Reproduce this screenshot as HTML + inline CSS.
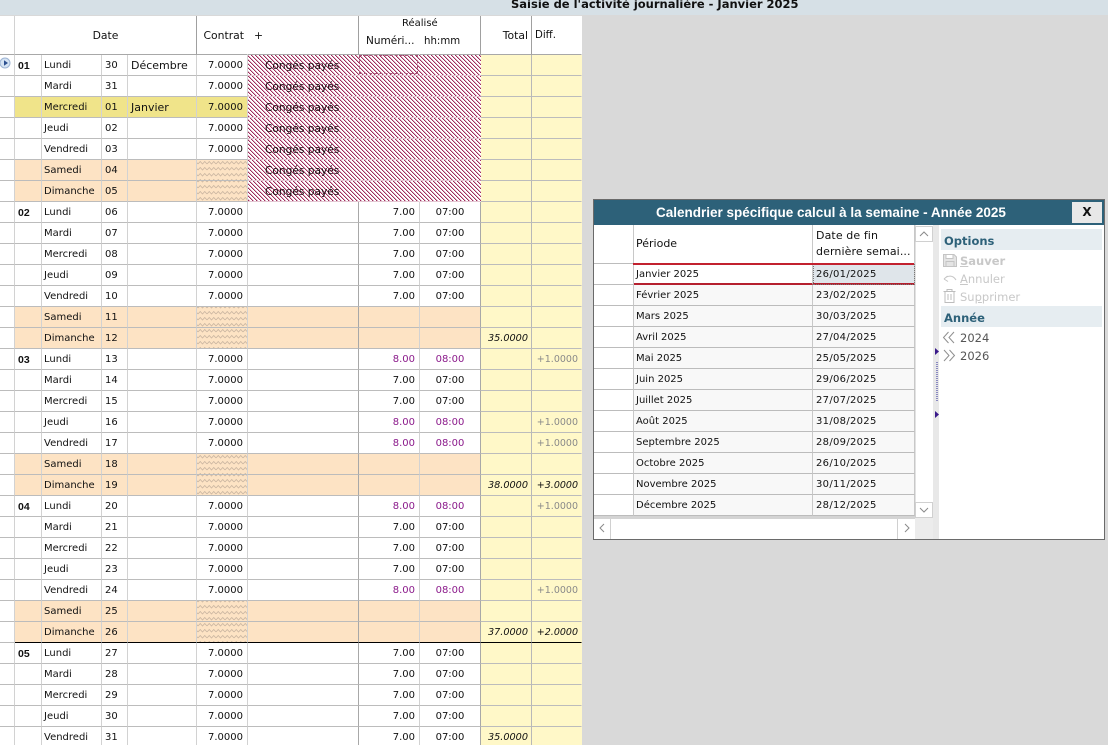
<!DOCTYPE html>
<html lang="fr"><head><meta charset="utf-8"><title>Saisie</title>
<style>
html,body{margin:0;padding:0;width:1108px;height:745px;overflow:hidden;background:#d9d9d9;font-family:"DejaVu Sans","Liberation Sans",sans-serif;font-size:10px;color:#111}
#bar{position:absolute;left:0;top:0;width:1108px;height:15px;background:#d6e0e6;overflow:hidden}
#bar b{position:absolute;left:511px;top:-3px;font-size:11.5px;line-height:14px;white-space:nowrap;color:#111}
#sheet{position:absolute;left:0;top:16px;width:582px;height:729px;overflow:hidden;background:#fff}
table{border-collapse:separate;border-spacing:0;table-layout:fixed}
#t{width:582px;position:relative}
#t td,#t th{box-sizing:border-box;height:21px;padding:0;border-right:1px solid #d2d2d2;border-bottom:1px solid #bcbcbc;white-space:nowrap;overflow:hidden;font-weight:400}
#t td{padding-top:2px;line-height:18px}
#t th{height:39px;border-bottom-color:#a8a8a8;position:relative;overflow:visible;font-size:10.8px;line-height:15px}
#t td:nth-child(2){padding-left:3px;font-weight:700;font-size:10.5px;font-family:"Liberation Sans",sans-serif}
#t td:nth-child(3){padding-left:2px}
#t td:nth-child(4){padding-left:3px}
#t td:nth-child(5){padding-left:3px;font-size:11px}
#t td:nth-child(6){text-align:right;padding-right:4px}
#t td:nth-child(7){padding-left:17px;font-size:10.6px;color:#1a0a10;border-right-color:#a8a8a8}
#t td:nth-child(8){text-align:right;padding-right:4px}
#t td:nth-child(9){text-align:center;border-right-color:#a8a8a8}
#t td:nth-child(10),#t td:nth-child(11){background:#fff8c8;font-style:italic;text-align:right;font-size:9.7px}
#t td:nth-child(10){padding-right:3px;border-right-color:#b8b8b8}
#t td:nth-child(11){padding-right:3px;border-right:1px solid #fff8c8;font-size:9.5px}
tr.p td:nth-child(n+2):nth-child(-n+9){background:#fde3c4}
tr.p td:nth-child(6){position:relative}
tr.h td:nth-child(n+2):nth-child(-n+6){background:#f0e48a}
#t tr.c td:nth-child(n+7):nth-child(-n+9){background:transparent;border-bottom-color:#e3c6d2;border-right-color:transparent}
#t tr.k td{border-bottom:1px solid #000}
#t tr.k td:nth-child(1){border-bottom:1px solid #bcbcbc}
.pu{color:#8b1a8b}
#t td.d{color:#8a8a8a;font-style:normal}
#t th.dk{border-right-color:#a0a0a0}
#t th.nr{border-right:1px solid #fff}
.zz{position:absolute;left:0;top:0;width:582px;height:729px;pointer-events:none}
#sel{position:absolute;left:359px;top:39px;width:59px;height:19px;border:1px dashed #a85478;box-sizing:border-box;background:transparent}
#play{position:absolute;left:0;top:40px;width:12px;height:14px}
.h1{position:absolute;white-space:nowrap}
/* dialog */
#dlg{position:absolute;left:593px;top:199px;width:512px;height:341px;box-sizing:border-box;border:1px solid #6a6a6a;background:#fff;overflow:hidden}
#tt{position:absolute;left:0;top:0;width:510px;height:25px;background:#2d6179;color:#fff;font-weight:700;line-height:26px}
#tt span{position:absolute;left:62px;top:0;white-space:nowrap;font-family:"Liberation Sans",sans-serif;font-size:13.5px}
#xb{position:absolute;left:478px;top:2px;width:30px;height:21px;background:#e8e8e8;color:#111;text-align:center;font-weight:700;font-size:12px;line-height:21px}
#g{position:absolute;left:0;top:25px;width:321px}
#g td,#g th{box-sizing:border-box;height:21px;padding:2px 0 0 2px;border-right:1px solid #c8c8c8;border-bottom:1px solid #bcbcbc;font-weight:400;text-align:left;white-space:nowrap;overflow:hidden;background:#f8f8f8;line-height:18px;font-size:10px}
#g td:nth-child(3){letter-spacing:.3px;padding-left:3px}
#g th{height:39px;background:#fff;line-height:16px;font-size:11px;padding-top:0}
#g td:first-child,#g th:first-child{background:#fff;padding:0}
#g tr.s td:nth-child(2),#g tr.s td:nth-child(3){background:#fff;border-bottom:2px solid #b5202f;padding-top:2px;line-height:17px}
#g tr.s td:nth-child(3){background:#dfe5ea;outline:1px dotted #777;outline-offset:-1px}
#rl{position:absolute;left:39px;top:63px;width:281px;height:2px;background:#c2212f}
.sb{position:absolute;background:#fff;border:1px solid #d0d0d0;box-sizing:border-box;text-align:center;color:#888}
#vt{position:absolute;left:321px;top:25px;width:18px;height:293px;background:#fff;border-left:1px solid #e2e2e2;box-sizing:border-box}
#ht{position:absolute;left:0;top:316px;width:321px;height:23px;background:#fff;border-top:3px solid #d4d4d4;box-sizing:border-box}
#cr{position:absolute;left:321px;top:318px;width:18px;height:21px;background:#ececec}
#sp{position:absolute;left:339px;top:25px;width:6px;height:314px;background:#e8e8e8}
.sec{position:absolute;left:347px;width:161px;height:21px;background:#e6edf1;color:#2d6179;font-weight:700;font-size:11.5px;line-height:24px;text-indent:3px}
.it{position:absolute;left:366px;color:#c8c8c8;font-size:11.5px;line-height:16px;white-space:nowrap}
.ic{position:absolute;left:348px}
</style></head><body>
<div id="bar"><b>Saisie de l'activité journalière - Janvier 2025</b></div>
<div id="sheet">
<svg class="zz" viewBox="0 0 582 729" shape-rendering="crispEdges">
<defs><pattern id="ha" x="0" y="0" width="4" height="4" patternUnits="userSpaceOnUse"><rect width="4" height="4" fill="#fff"/><path d="M0 0h1v1H0zM1 1h1v1H1zM2 2h1v1H2zM3 3h1v1H3z" fill="#a02c5c"/><path d="M1 0h1v1H1zM2 1h1v1H2zM3 2h1v1H3zM0 3h1v1H0z" fill="#dcb4c5"/></pattern></defs>
<rect x="248" y="39" width="233" height="147" fill="url(#ha)"/>
</svg>
<table id="t">
<colgroup><col style="width:15px"><col style="width:27px"><col style="width:60px"><col style="width:26px"><col style="width:69px"><col style="width:51px"><col style="width:111px"><col style="width:61px"><col style="width:61px"><col style="width:51px"><col style="width:50px"></colgroup>
<tr><th></th><th colspan="4" class="dk" style="padding-top:1px">Date</th><th class="nr" style="text-align:right;padding-right:3px;padding-top:1px">Contrat</th><th class="dk" style="text-align:left;padding-left:6px;padding-top:1px">+</th><th class="nr" style="vertical-align:top"><span class="h1" style="left:43px;top:0;font-size:10px">Réalisé</span><span class="h1" style="left:7px;top:18px;font-size:10.5px">Numéri...</span></th><th class="dk" style="vertical-align:top"><span class="h1" style="left:4px;top:18px;font-size:10.2px">hh:mm</span></th><th class="dk" style="text-align:right;padding-right:3px">Total</th><th class="nr" style="text-align:left;padding-left:3px;font-size:10.2px">Diff.</th></tr>
<tr class="c"><td></td><td>01</td><td>Lundi</td><td>30</td><td>Décembre</td><td>7.0000</td><td>Congés payés</td><td></td><td></td><td></td><td></td></tr>
<tr class="c"><td></td><td></td><td>Mardi</td><td>31</td><td></td><td>7.0000</td><td>Congés payés</td><td></td><td></td><td></td><td></td></tr>
<tr class="c h"><td></td><td></td><td>Mercredi</td><td>01</td><td>Janvier</td><td>7.0000</td><td>Congés payés</td><td></td><td></td><td></td><td></td></tr>
<tr class="c"><td></td><td></td><td>Jeudi</td><td>02</td><td></td><td>7.0000</td><td>Congés payés</td><td></td><td></td><td></td><td></td></tr>
<tr class="c"><td></td><td></td><td>Vendredi</td><td>03</td><td></td><td>7.0000</td><td>Congés payés</td><td></td><td></td><td></td><td></td></tr>
<tr class="c p"><td></td><td></td><td>Samedi</td><td>04</td><td></td><td></td><td>Congés payés</td><td></td><td></td><td></td><td></td></tr>
<tr class="c p"><td></td><td></td><td>Dimanche</td><td>05</td><td></td><td></td><td>Congés payés</td><td></td><td></td><td></td><td></td></tr>
<tr><td></td><td>02</td><td>Lundi</td><td>06</td><td></td><td>7.0000</td><td></td><td>7.00</td><td>07:00</td><td></td><td></td></tr>
<tr><td></td><td></td><td>Mardi</td><td>07</td><td></td><td>7.0000</td><td></td><td>7.00</td><td>07:00</td><td></td><td></td></tr>
<tr><td></td><td></td><td>Mercredi</td><td>08</td><td></td><td>7.0000</td><td></td><td>7.00</td><td>07:00</td><td></td><td></td></tr>
<tr><td></td><td></td><td>Jeudi</td><td>09</td><td></td><td>7.0000</td><td></td><td>7.00</td><td>07:00</td><td></td><td></td></tr>
<tr><td></td><td></td><td>Vendredi</td><td>10</td><td></td><td>7.0000</td><td></td><td>7.00</td><td>07:00</td><td></td><td></td></tr>
<tr class="p"><td></td><td></td><td>Samedi</td><td>11</td><td></td><td></td><td></td><td></td><td></td><td></td><td></td></tr>
<tr class="p"><td></td><td></td><td>Dimanche</td><td>12</td><td></td><td></td><td></td><td></td><td></td><td>35.0000</td><td></td></tr>
<tr><td></td><td>03</td><td>Lundi</td><td>13</td><td></td><td>7.0000</td><td></td><td class="pu">8.00</td><td class="pu">08:00</td><td></td><td class="d">+1.0000</td></tr>
<tr><td></td><td></td><td>Mardi</td><td>14</td><td></td><td>7.0000</td><td></td><td>7.00</td><td>07:00</td><td></td><td></td></tr>
<tr><td></td><td></td><td>Mercredi</td><td>15</td><td></td><td>7.0000</td><td></td><td>7.00</td><td>07:00</td><td></td><td></td></tr>
<tr><td></td><td></td><td>Jeudi</td><td>16</td><td></td><td>7.0000</td><td></td><td class="pu">8.00</td><td class="pu">08:00</td><td></td><td class="d">+1.0000</td></tr>
<tr><td></td><td></td><td>Vendredi</td><td>17</td><td></td><td>7.0000</td><td></td><td class="pu">8.00</td><td class="pu">08:00</td><td></td><td class="d">+1.0000</td></tr>
<tr class="p"><td></td><td></td><td>Samedi</td><td>18</td><td></td><td></td><td></td><td></td><td></td><td></td><td></td></tr>
<tr class="p"><td></td><td></td><td>Dimanche</td><td>19</td><td></td><td></td><td></td><td></td><td></td><td>38.0000</td><td>+3.0000</td></tr>
<tr><td></td><td>04</td><td>Lundi</td><td>20</td><td></td><td>7.0000</td><td></td><td class="pu">8.00</td><td class="pu">08:00</td><td></td><td class="d">+1.0000</td></tr>
<tr><td></td><td></td><td>Mardi</td><td>21</td><td></td><td>7.0000</td><td></td><td>7.00</td><td>07:00</td><td></td><td></td></tr>
<tr><td></td><td></td><td>Mercredi</td><td>22</td><td></td><td>7.0000</td><td></td><td>7.00</td><td>07:00</td><td></td><td></td></tr>
<tr><td></td><td></td><td>Jeudi</td><td>23</td><td></td><td>7.0000</td><td></td><td>7.00</td><td>07:00</td><td></td><td></td></tr>
<tr><td></td><td></td><td>Vendredi</td><td>24</td><td></td><td>7.0000</td><td></td><td class="pu">8.00</td><td class="pu">08:00</td><td></td><td class="d">+1.0000</td></tr>
<tr class="p"><td></td><td></td><td>Samedi</td><td>25</td><td></td><td></td><td></td><td></td><td></td><td></td><td></td></tr>
<tr class="p k"><td></td><td></td><td>Dimanche</td><td>26</td><td></td><td></td><td></td><td></td><td></td><td>37.0000</td><td>+2.0000</td></tr>
<tr><td></td><td>05</td><td>Lundi</td><td>27</td><td></td><td>7.0000</td><td></td><td>7.00</td><td>07:00</td><td></td><td></td></tr>
<tr><td></td><td></td><td>Mardi</td><td>28</td><td></td><td>7.0000</td><td></td><td>7.00</td><td>07:00</td><td></td><td></td></tr>
<tr><td></td><td></td><td>Mercredi</td><td>29</td><td></td><td>7.0000</td><td></td><td>7.00</td><td>07:00</td><td></td><td></td></tr>
<tr><td></td><td></td><td>Jeudi</td><td>30</td><td></td><td>7.0000</td><td></td><td>7.00</td><td>07:00</td><td></td><td></td></tr>
<tr><td></td><td></td><td>Vendredi</td><td>31</td><td></td><td>7.0000</td><td></td><td>7.00</td><td>07:00</td><td>35.0000</td><td></td></tr>
</table>
<svg class="zz" viewBox="0 0 582 729">
<defs><pattern id="zg" width="9" height="6" patternUnits="userSpaceOnUse"><path d="M0 4L2.250 1.500L4.500 4L6.750 1.500L9 4" fill="none" stroke="#cbb7a1" stroke-width=".9"/></pattern></defs>
<g fill="url(#zg)"><rect x="197" y="144" width="50" height="20"/><rect x="197" y="165" width="50" height="20"/><rect x="197" y="291" width="50" height="20"/><rect x="197" y="312" width="50" height="20"/><rect x="197" y="438" width="50" height="20"/><rect x="197" y="459" width="50" height="20"/><rect x="197" y="585" width="50" height="20"/><rect x="197" y="606" width="50" height="20"/></g>
</svg>
<div id="sel"></div>
<svg id="play" viewBox="0 0 12 14"><circle cx="5" cy="7" r="5" fill="#d5e3f3" stroke="#9db4d4"/><path d="M4 4.200L8 7L4 9.800Z" fill="#2c4f8f"/></svg>
</div>

<div id="dlg">
<div id="tt"><span>Calendrier spécifique calcul à la semaine - Année 2025</span><div id="xb">X</div></div>
<table id="g">
<colgroup><col style="width:40px"><col style="width:179px"><col style="width:102px"></colgroup>
<tr><th></th><th>Période</th><th style="padding-left:3px;letter-spacing:.1px">Date de fin<br>dernière semai...</th></tr>
<tr class="s"><td></td><td>Janvier 2025</td><td>26/01/2025</td></tr>
<tr><td></td><td>Février 2025</td><td>23/02/2025</td></tr>
<tr><td></td><td>Mars 2025</td><td>30/03/2025</td></tr>
<tr><td></td><td>Avril 2025</td><td>27/04/2025</td></tr>
<tr><td></td><td>Mai 2025</td><td>25/05/2025</td></tr>
<tr><td></td><td>Juin 2025</td><td>29/06/2025</td></tr>
<tr><td></td><td>Juillet 2025</td><td>27/07/2025</td></tr>
<tr><td></td><td>Août 2025</td><td>31/08/2025</td></tr>
<tr><td></td><td>Septembre 2025</td><td>28/09/2025</td></tr>
<tr><td></td><td>Octobre 2025</td><td>26/10/2025</td></tr>
<tr><td></td><td>Novembre 2025</td><td>30/11/2025</td></tr>
<tr><td></td><td>Décembre 2025</td><td>28/12/2025</td></tr>
</table>
<div id="rl"></div>
<div id="vt"></div>
<div id="ht"></div>
<div id="cr"></div>
<div class="sb" style="left:321px;top:26px;width:18px;height:16px"><svg width="16" height="14" viewBox="0 0 16 14"><path d="M4 9L8 5L12 9" fill="none" stroke="#8a8a8a"/></svg></div>
<div class="sb" style="left:321px;top:302px;width:18px;height:16px"><svg width="16" height="14" viewBox="0 0 16 14"><path d="M4 5L8 9L12 5" fill="none" stroke="#8a8a8a"/></svg></div>
<div class="sb" style="left:1px;top:319px;width:16px;height:20px;border-width:0 1px 0 0"><svg width="15" height="18" viewBox="0 0 15 18"><path d="M9 5L5 9L9 13" fill="none" stroke="#8a8a8a"/></svg></div>
<div class="sb" style="left:303px;top:319px;width:17px;height:20px;border-width:0 0 0 1px"><svg width="15" height="18" viewBox="0 0 15 18"><path d="M6 5L10 9L6 13" fill="none" stroke="#8a8a8a"/></svg></div>
<div id="sp"></div>
<svg style="position:absolute;left:339px;top:140px" width="6" height="90" viewBox="0 0 6 90"><path d="M2 8L6 11.500L2 15Z" fill="#3a1a8a"/><path d="M2 71L6 74.500L2 78Z" fill="#3a1a8a"/><path d="M4 22V62" stroke="#2a2a9a" stroke-dasharray="1 1"/></svg>
<div class="sec" style="top:29px">Options</div>
<svg class="ic" style="top:53px" width="16" height="15" viewBox="0 0 16 15"><path d="M1.500 1.500H12L14.500 4V13.500H1.500Z M4 1.500V5.500H11V1.500 M4 13.500V8.500H12V13.500" fill="#e4e4e4" stroke="#c4c4c4"/></svg>
<div class="it" style="top:53px;font-weight:700"><u>S</u>auver</div>
<svg class="ic" style="top:72px" width="16" height="14" viewBox="0 0 16 14"><path d="M2 7L5.500 4M2 7L6 9.500M2 7C6 3 11 3 14 8" fill="none" stroke="#c4c4c4"/></svg>
<div class="it" style="top:71px"><u>A</u>nnuler</div>
<svg class="ic" style="top:89px" width="16" height="15" viewBox="0 0 16 15"><path d="M1.500 2.500H13.500M5 2.500V.5H10V2.500M3 2.500V13.500H12V2.500M6 5V11M9 5V11" fill="none" stroke="#bdbdbd"/></svg>
<div class="it" style="top:89px">Su<u>p</u>primer</div>
<div class="sec" style="top:106px">Année</div>
<svg class="ic" style="top:131px" width="14" height="13" viewBox="0 0 14 13"><path d="M6.500 1L1.500 6.500L6.500 12M12 1L7 6.500L12 12" fill="none" stroke="#8f8f8f"/></svg>
<div class="it" style="top:130px;color:#555">2024</div>
<svg class="ic" style="top:149px" width="14" height="13" viewBox="0 0 14 13"><path d="M2 1L7 6.500L2 12M7.500 1L12.500 6.500L7.500 12" fill="none" stroke="#8f8f8f"/></svg>
<div class="it" style="top:148px;color:#555">2026</div>
</div>
</body></html>
